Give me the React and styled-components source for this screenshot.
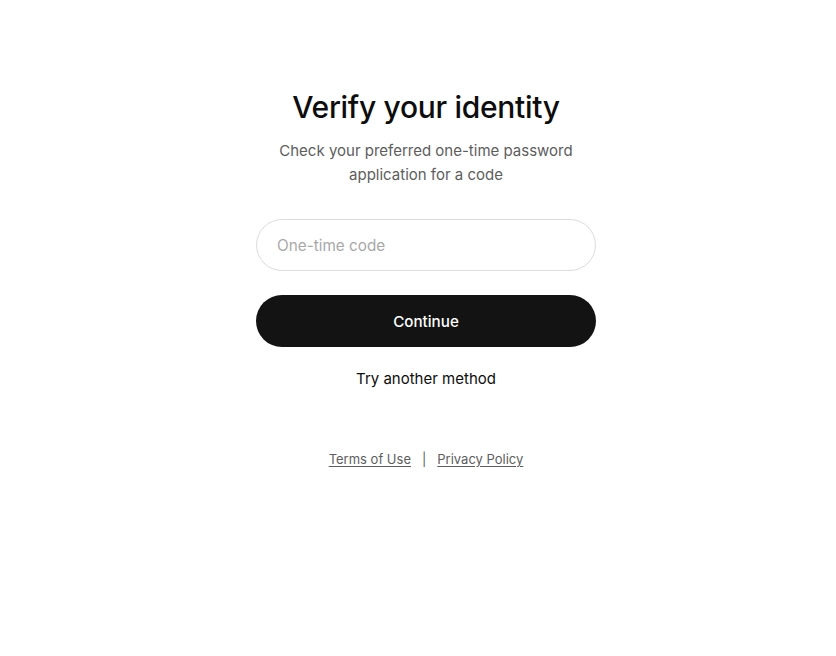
import * as React from 'react';
import styled, {createGlobalStyle} from "styled-components";

const GlobalStyle = createGlobalStyle`
  html, body {
    margin: 0;
    padding: 0;
    background: #ffffff;
  }
  body {
    font-family: Inter, "Liberation Sans", Arial, sans-serif;
    color: #0d0d0d;
  }
`

const Page = styled.main`
  display: flex;
  flex-direction: column;
  align-items: center;
  padding: 88px 0 0 16px;
  min-height: 656px;
  box-sizing: border-box;
`

const Card = styled.section`
  width: 340px;
  display: flex;
  flex-direction: column;
  align-items: center;
`

const Title = styled.h1`
  margin: 0;
  font-size: 30px;
  font-weight: 500;
  line-height: 38px;
  letter-spacing: -0.3px;
  color: #0d0d0d;
`

const Subtitle = styled.p`
  margin: 13px 0 0;
  font-size: 15px;
  line-height: 24px;
  color: #5d5d5d;
  text-align: center;
  width: 310px;
`

const Field = styled.input`
  box-sizing: border-box;
  width: 100%;
  height: 52px;
  margin-top: 32px;
  padding: 0 20px;
  border: 1px solid #dcdcdc;
  border-radius: 26px;
  font: inherit;
  font-size: 15.3px;
  color: #0d0d0d;
  outline: none;

  &::placeholder {
    color: #a8a8a8;
  }
`

const Button = styled.button`
  box-sizing: border-box;
  width: 100%;
  height: 52px;
  margin-top: 24px;
  border: none;
  border-radius: 26px;
  background: #131313;
  color: #ffffff;
  font: inherit;
  font-size: 15.2px;
  font-weight: 500;
  cursor: pointer;
`

const TextButton = styled.button`
  margin-top: 21px;
  border: none;
  background: none;
  padding: 0;
  font: inherit;
  font-size: 15px;
  line-height: 22px;
  color: #0d0d0d;
  cursor: pointer;
`

const Footer = styled.footer`
  display: flex;
  align-items: center;
  gap: 11px;
  margin-top: 61px;
  font-size: 13px;
  color: #5d5d5d;
`

const FooterLink = styled.a`
  color: #5d5d5d;
  text-decoration: underline;
  text-underline-offset: 2px;
`

export default function App() {
    return (
        <>
            <GlobalStyle/>
            <Page>
                <Card>
                    <Title>Verify your identity</Title>
                    <Subtitle>Check your preferred one-time password application for a code</Subtitle>
                    <Field placeholder="One-time code"/>
                    <Button>Continue</Button>
                    <TextButton>Try another method</TextButton>
                </Card>
                <Footer>
                    <FooterLink href="#">Terms of Use</FooterLink>
                    <span>|</span>
                    <FooterLink href="#">Privacy Policy</FooterLink>
                </Footer>
            </Page>
        </>
    );
}
